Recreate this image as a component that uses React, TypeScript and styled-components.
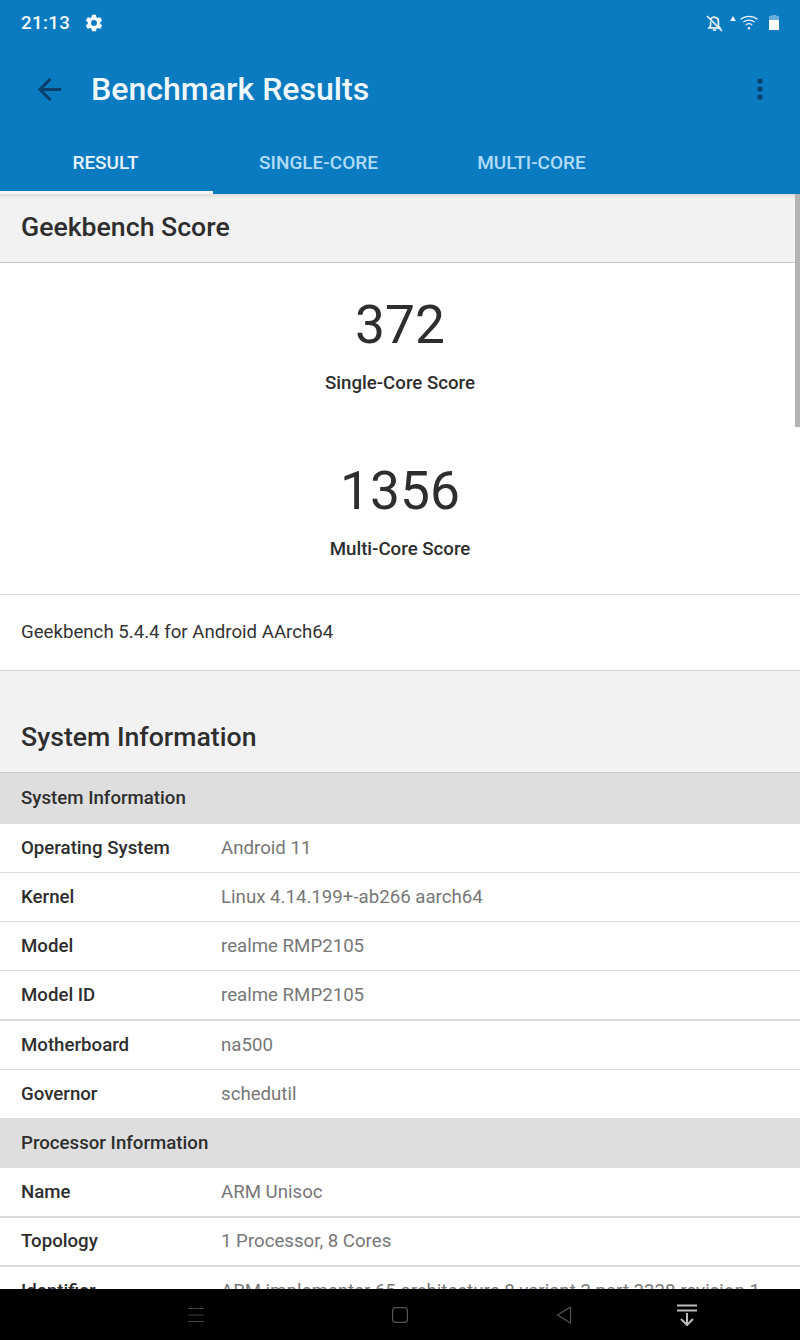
import React from "react";
import styled, { createGlobalStyle } from "styled-components";

const GlobalStyle = createGlobalStyle`
  html, body {
    margin: 0;
    padding: 0;
    background: #fff;
    font-family: Roboto, "Liberation Sans", sans-serif;
  }
  #root {
    height: 1340px;
  }
`;

const Screen = styled.div`
  width: 800px;
  height: 1340px;
  display: flex;
  flex-direction: column;
  overflow: hidden;
`;

const Header = styled.header`
  background-color: #0b7bc1;
  flex: none;
`;

const StatusBar = styled.div`
  height: 46px;
  display: flex;
  align-items: center;
  justify-content: space-between;
  padding: 0 21px;
  color: #f4f9fc;
`;

const StatusLeft = styled.div`
  display: flex;
  align-items: center;
  gap: 14px;
`;

const Time = styled.span`
  font-size: 18.67px;
  font-weight: 500;
  letter-spacing: 0.4px;
`;

const StatusRight = styled.div`
  display: flex;
  align-items: center;
`;

const StatusIcon = styled.svg<{ $gap?: number; $lift?: number }>`
  flex: none;
  margin-left: ${(p) => p.$gap ?? 0}px;
  margin-bottom: ${(p) => p.$lift ?? 0}px;
`;

const Toolbar = styled.div`
  height: 86px;
  display: flex;
  align-items: center;
  padding: 0 37px 0 32px;
`;

const BackIcon = styled.svg`
  flex: none;
  fill: #0b3f6b;
`;

const Title = styled.h1`
  margin: 0 0 0 24px;
  flex: 1;
  font-size: 32.1px;
  font-weight: 500;
  color: #eef7fc;
`;

const Tabs = styled.nav`
  display: flex;
  height: 62px;
`;

const Tab = styled.div<{ $active?: boolean }>`
  width: 213px;
  display: flex;
  align-items: center;
  justify-content: center;
  font-size: 19px;
  font-weight: 500;
  color: ${(p) => (p.$active ? "#e6f3fb" : "#aedcf8")};
  border-bottom: 3px solid ${(p) => (p.$active ? "#f4f6f8" : "transparent")};
  box-sizing: border-box;
  padding: 1px 2px 0 0;
`;

const Content = styled.main`
  flex: 1;
  min-height: 0;
  overflow: hidden;
  position: relative;
`;

const ScrollThumb = styled.div`
  position: absolute;
  top: 0;
  right: 0;
  width: 5px;
  height: 233px;
  background: #b4b4b4;
`;

const SectionHead = styled.div`
  height: 69px;
  box-sizing: border-box;
  background: linear-gradient(#dddddd, #f2f2f2 5px);
  border-bottom: 1px solid #c9c9c9;
  display: flex;
  align-items: center;
  padding: 0 0 2px 21px;
  font-size: 26.67px;
  font-weight: 500;
  color: #2e2e2e;
`;

const Scores = styled.div`
  display: flex;
  flex-direction: column;
  align-items: center;
  padding-top: 29px;
  height: 332px;
  box-sizing: border-box;
  border-bottom: 1px solid #dcdcdc;
`;

const ScoreValue = styled.div`
  font-size: 53.33px;
  line-height: 66px;
  color: #2e2e2e;
`;

const ScoreLabel = styled.div`
  font-size: 18.67px;
  font-weight: 500;
  line-height: 24px;
  color: #2e2e2e;
  margin: 13px 0 63px;
`;

const VersionRow = styled.div`
  height: 76px;
  box-sizing: border-box;
  border-bottom: 1px solid #d2d2d2;
  display: flex;
  align-items: center;
  padding: 0 0 1px 21px;
  font-size: 18.67px;
  color: #333;
`;

const InfoHead = styled(SectionHead)`
  height: 102px;
  background: #f2f2f2;
  align-items: flex-end;
  padding-bottom: 19px;
`;

const GroupRow = styled.div<{ $height: number }>`
  height: ${(p) => p.$height}px;
  box-sizing: border-box;
  background: #dedede;
  display: flex;
  align-items: center;
  padding: 0 0 1px 21px;
  font-size: 18.67px;
  font-weight: 500;
  color: #2e2e2e;
`;

const Row = styled.div<{ $height: number; $line: number }>`
  height: ${(p) => p.$height}px;
  box-sizing: border-box;
  border-bottom: ${(p) => p.$line}px solid #dcdcdc;
  display: flex;
  align-items: center;
  padding: 0 0 1px 21px;
  font-size: 18.67px;
  background: #fff;
`;

const RowKey = styled.span`
  width: 200px;
  flex: none;
  font-weight: 500;
  color: #2e2e2e;
`;

const RowValue = styled.span`
  color: #777;
  white-space: nowrap;
`;

const NavBar = styled.footer`
  height: 51px;
  flex: none;
  background: #000;
  display: flex;
  align-items: center;
  padding-left: 188px;
`;

const NavIcon = styled.svg<{ $gap?: number }>`
  flex: none;
  fill: none;
  margin-left: ${(p) => p.$gap ?? 0}px;
`;

const systemRows = [
  ["Operating System", "Android 11", 49, 1],
  ["Kernel", "Linux 4.14.199+-ab266 aarch64", 49, 1],
  ["Model", "realme RMP2105", 49, 1],
  ["Model ID", "realme RMP2105", 50, 2],
  ["Motherboard", "na500", 49, 1],
  ["Governor", "schedutil", 48, 0],
] as const;

const cpuRows = [
  ["Name", "ARM Unisoc", 50, 2],
  ["Topology", "1 Processor, 8 Cores", 49, 2],
  ["Identifier", "ARM implementer 65 architecture 8 variant 3 part 3338 revision 1", 49, 1],
] as const;

function Gear() {
  return (
    <svg width="20" height="20" viewBox="0 0 24 24" fill="#f4f9fc">
      <path d="M19.4 13c.04-.3.1-.65.1-1s-.06-.7-.1-1l2.1-1.65c.2-.15.24-.42.12-.64l-2-3.46c-.12-.22-.4-.3-.6-.22l-2.5 1c-.5-.4-1.1-.72-1.7-1l-.38-2.65A.5.5 0 0 0 14 2h-4a.5.5 0 0 0-.5.42l-.37 2.65c-.6.26-1.2.6-1.7 1l-2.5-1c-.22-.08-.48 0-.6.22l-2 3.46c-.12.22-.07.49.12.64L4.55 11c-.04.3-.05.65-.05 1s.01.7.05 1l-2.1 1.65c-.2.15-.24.42-.12.64l2 3.46c.12.22.38.3.6.22l2.5-1c.5.4 1.1.72 1.7 1l.37 2.65c.04.24.25.42.5.42h4c.25 0 .46-.18.5-.42l.37-2.65c.6-.26 1.2-.6 1.7-1l2.5 1c.22.08.48 0 .6-.22l2-3.46c.12-.22.07-.49-.12-.64zM12 15.5a3.5 3.5 0 1 1 0-7 3.5 3.5 0 0 1 0 7z" />
    </svg>
  );
}

function Dots() {
  return (
    <svg width="6" height="22" viewBox="0 0 6 22" fill="#0b3f6b">
      <circle cx="3" cy="3" r="2.6" />
      <circle cx="3" cy="11" r="2.6" />
      <circle cx="3" cy="19" r="2.6" />
    </svg>
  );
}

export default function App() {
  return (
    <>
      <GlobalStyle />
      <Screen>
        <Header>
          <StatusBar>
            <StatusLeft>
              <Time>21:13</Time>
              <Gear />
            </StatusLeft>
            <StatusRight>
              {/* muted bell */}
              <StatusIcon width="17" height="17" viewBox="0 0 17 17" fill="none" stroke="#e8f3fa" strokeWidth="1.7">
                <path d="M4.6 4.2A4.2 4.2 0 0 1 12.4 6.6v4.2l1.5 2H3.1l1.5-2V6.6" />
                <path d="M6.9 15h3.2" />
                <path d="M1 1l15 15" />
              </StatusIcon>
              <StatusIcon $gap={7} $lift={9} width="6" height="5" viewBox="0 0 6 5">
                <path d="M3 0l3 5H0z" fill="#e8f3fa" />
              </StatusIcon>
              {/* wifi */}
              <StatusIcon $gap={4} $lift={1} width="18" height="15" viewBox="0 0 18 15" fill="none" stroke="#e8f3fa" strokeWidth="1.2">
                <path d="M.6 4.3C5.4.3 12.6.3 17.4 4.3" />
                <path d="M3.2 7.1c3.4-2.7 8.2-2.7 11.6 0" />
                <path d="M5.8 9.9c1.9-1.4 4.5-1.4 6.4 0" />
                <circle cx="9" cy="13.2" r="1.2" fill="#e8f3fa" stroke="none" />
              </StatusIcon>
              {/* battery */}
              <StatusIcon $gap={11} $lift={2} width="10" height="15" viewBox="0 0 10 15">
                <path d="M2.5 0h5v1H10v14H0V1h2.5z" fill="#6aaedb" />
                <rect x="0" y="5" width="10" height="10" fill="#fff" />
              </StatusIcon>
            </StatusRight>
          </StatusBar>
          <Toolbar>
            <BackIcon width="35" height="35" viewBox="0 0 24 24">
              <path d="M20 11H7.83l5.59-5.59L12 4l-8 8 8 8 1.41-1.41L7.83 13H20v-2z" />
            </BackIcon>
            <Title>Benchmark Results</Title>
            <Dots />
          </Toolbar>
          <Tabs>
            <Tab $active>RESULT</Tab>
            <Tab>SINGLE-CORE</Tab>
            <Tab>MULTI-CORE</Tab>
          </Tabs>
        </Header>
        <Content>
          <SectionHead>Geekbench Score</SectionHead>
          <Scores>
            <ScoreValue>372</ScoreValue>
            <ScoreLabel>Single-Core Score</ScoreLabel>
            <ScoreValue>1356</ScoreValue>
            <ScoreLabel>Multi-Core Score</ScoreLabel>
          </Scores>
          <VersionRow>Geekbench 5.4.4 for Android AArch64</VersionRow>
          <InfoHead>System Information</InfoHead>
          <GroupRow $height={51}>System Information</GroupRow>
          {systemRows.map(([k, v, h, l]) => (
            <Row key={k} $height={h} $line={l}>
              <RowKey>{k}</RowKey>
              <RowValue>{v}</RowValue>
            </Row>
          ))}
          <GroupRow $height={50}>Processor Information</GroupRow>
          {cpuRows.map(([k, v, h, l]) => (
            <Row key={k} $height={h} $line={l}>
              <RowKey>{k}</RowKey>
              <RowValue>{v}</RowValue>
            </Row>
          ))}
          <ScrollThumb />
        </Content>
        <NavBar>
          <NavIcon width="16" height="16" viewBox="0 0 16 16" stroke="#444" strokeWidth="1.2">
            <path d="M0 1.5h16M0 8h16M0 14.5h16" />
          </NavIcon>
          <NavIcon $gap={188} width="16" height="16" viewBox="0 0 16 16" stroke="#555" strokeWidth="1.2">
            <rect x="0.6" y="0.6" width="14.8" height="14.8" rx="3" />
          </NavIcon>
          <NavIcon $gap={148} width="16" height="18" viewBox="0 0 16 18" stroke="#555" strokeWidth="1.2">
            <path d="M14.5 1 1.5 9l13 8z" strokeLinejoin="round" />
          </NavIcon>
          <NavIcon $gap={105} width="20" height="22" viewBox="0 0 20 22" stroke="#bdbdbd" strokeWidth="2">
            <path d="M0 1.5h20M0 6.5h20M10 9v12M4 15l6 6 6-6" />
          </NavIcon>
        </NavBar>
      </Screen>
    </>
  );
}
